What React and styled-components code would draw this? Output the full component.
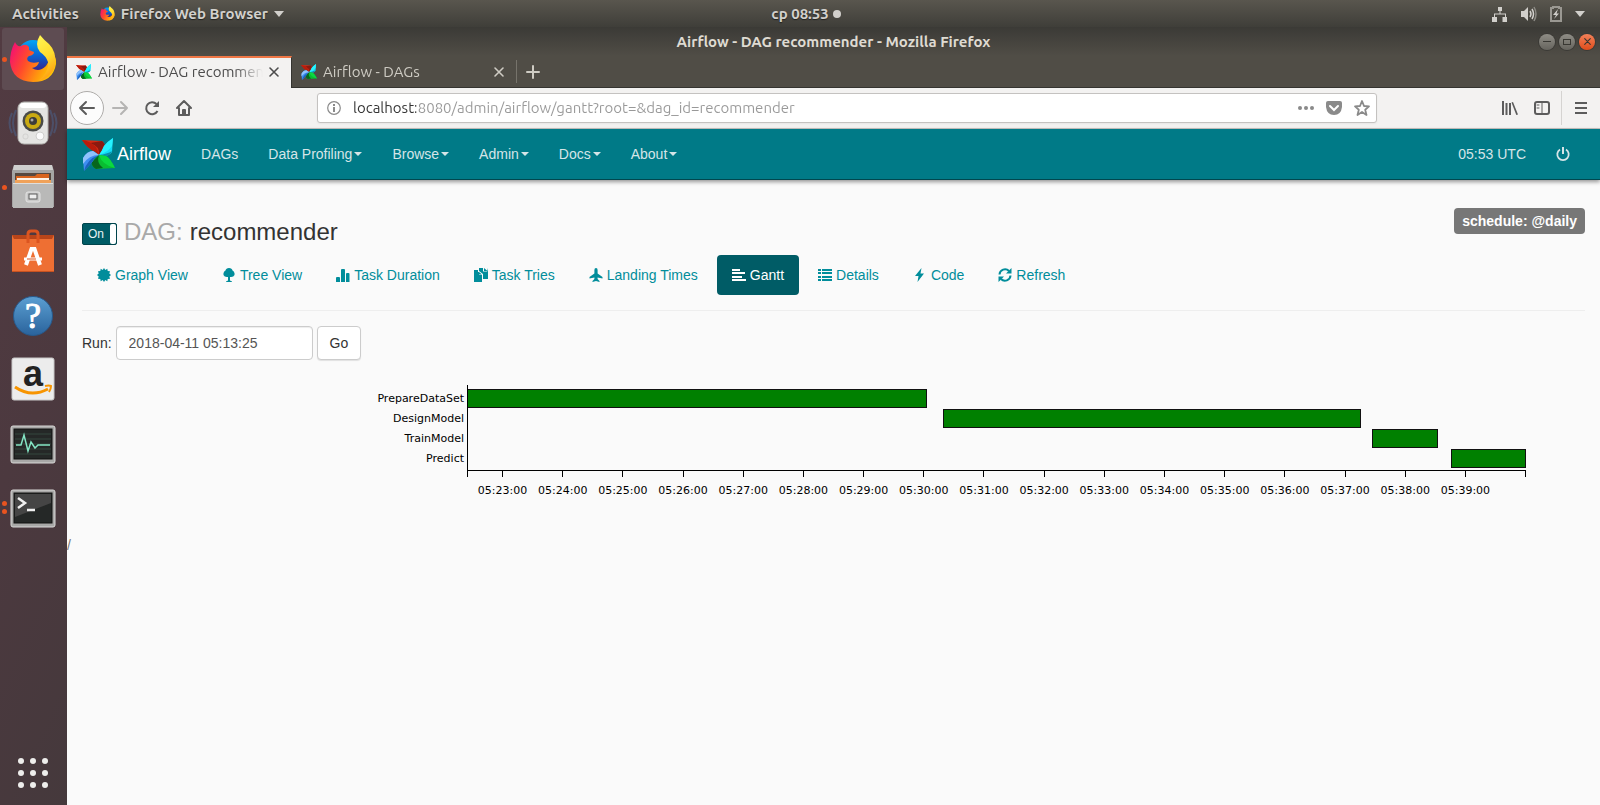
import React from "react";
import styled, { createGlobalStyle, css } from "styled-components";

const GlobalStyle = createGlobalStyle`
  *, *::before, *::after { box-sizing: border-box; }
  body { margin: 0; background: #fafafa; }
  button, input { font: inherit; }
`;

const UI_FONT = `Ubuntu, "Noto Sans", sans-serif`;
const PAGE_FONT = `"Liberation Sans", Arial, sans-serif`;

const resetButton = css`
  border: 0;
  padding: 0;
  background: none;
  color: inherit;
  display: flex;
  align-items: center;
  justify-content: center;
`;

/* ---------- desktop ---------- */

const Desktop = styled.div`
  min-height: 100vh;
  display: flex;
  flex-direction: column;
  font-family: ${UI_FONT};
`;

const TopBar = styled.header`
  height: 27px;
  flex: none;
  display: grid;
  grid-template-columns: 1fr auto 1fr;
  align-items: center;
  padding: 0 15px 0 12px;
  background: linear-gradient(#59564e, #3f3e39);
  color: #d2d0cc;
  font-size: 15px;
  font-weight: 600;
  text-shadow: 0 1px 1px #22221f;
`;

const TopGroup = styled.div`
  display: flex;
  align-items: center;
  justify-content: ${(p) => (p.$end ? "flex-end" : "flex-start")};
  gap: ${(p) => (p.$end ? "13px" : "21px")};
`;

const TopButton = styled.button`
  ${resetButton}
  gap: 6px;
  line-height: 20px;
  text-shadow: inherit;
  white-space: nowrap;
`;

const Clock = styled(TopButton)`
  gap: 4px;
  padding-left: 15px;
`;

const Body = styled.div`
  flex: 1;
  display: flex;
  min-width: 0;
`;

const Dock = styled.nav`
  width: 67px;
  flex: none;
  display: flex;
  flex-direction: column;
  gap: 2px;
  padding: 1px 3px 1px 2px;
  background: linear-gradient(115deg, #523b42, #4c393f 50%, #45393c);
`;

const DockButton = styled.button`
  ${resetButton}
  position: relative;
  height: 62px;
  border-radius: 3px;
  background: ${(p) => (p.$active ? "#5e4c52" : "none")};
  &:last-child {
    margin-top: auto;
  }
`;

const RunningDots = styled.span`
  position: absolute;
  left: 0;
  top: 0;
  bottom: 0;
  display: flex;
  flex-direction: column;
  justify-content: center;
  gap: 3px;
  i {
    width: 5px;
    height: 5px;
    border-radius: 50%;
    background: #e95420;
  }
`;

/* ---------- browser window ---------- */

const Window = styled.div`
  flex: 1;
  min-width: 0;
  display: flex;
  flex-direction: column;
`;

const TitleBar = styled.div`
  height: 29px;
  display: grid;
  grid-template-columns: 1fr auto 1fr;
  align-items: center;
  background: linear-gradient(#3b3a36, #504d46);
  color: #dfdbd2;
  font-size: 15px;
  line-height: 20px;
  font-weight: 700;
`;

const WindowButtons = styled.div`
  grid-column: 3;
  display: flex;
  justify-content: flex-end;
  gap: 4px;
  padding-right: 5px;
`;

const WindowTitle = styled.span`
  grid-column: 2;
`;

const WindowButton = styled.button`
  ${resetButton}
  width: 16px;
  height: 16px;
  border-radius: 50%;
  color: #383732;
  background: ${(p) =>
    p.$close ? "linear-gradient(#f38159, #df4c1b)" : "linear-gradient(#8f8d86, #66645e)"};
  box-shadow: 0 0 0 1px #3b3a36;
`;

const TabStrip = styled.div`
  height: 32px;
  display: flex;
  background: #504d46;
  border-bottom: 1px solid #353430;
`;

const Tab = styled.div`
  width: 225px;
  display: flex;
  align-items: center;
  gap: 6px;
  padding: 0 13px 0 9px;
  font-size: 15px;
  line-height: 20px;
  color: ${(p) => (p.$active ? "#4c4c4c" : "#cfccc4")};
  ${(p) =>
    p.$active &&
    css`
      height: 32px;
      padding: 0 12px 3px 9px;
      background: #f3f2f1;
      border-top: 2px solid #f07746;
      border-right: 1px solid #353430;
    `}
`;

const TabTitle = styled.span`
  flex: 1;
  overflow: hidden;
  white-space: nowrap;
  mask-image: linear-gradient(to left, transparent, #000 28px);
`;

const TabClose = styled.button`
  ${resetButton}
`;

const NewTab = styled.button`
  ${resetButton}
  margin: 4px 0 4px -1px;
  padding: 0 9px;
  border-left: 1px solid #76736b;
  color: #cfccc4;
`;

const Toolbar = styled.div`
  height: 41px;
  display: flex;
  align-items: center;
  padding: 0 13px 0 4px;
  background: #f3f2f1;
  border-bottom: 1px solid #c5c2bf;
  color: #5c5c5c;
`;

const NavButtons = styled.div`
  display: flex;
  align-items: center;
  gap: 16px;
`;

const ToolButton = styled.button`
  ${resetButton}
  ${(p) =>
    p.$round &&
    css`
      width: 34px;
      height: 34px;
      margin-right: -8px;
      margin-left: -1px;
      border: 1px solid #aeacaa;
      border-radius: 50%;
      background: #fcfcfc;
    `}
`;

const UrlBox = styled.div`
  flex: 1;
  height: 30px;
  margin-left: 125px;
  margin-right: 125px;
  display: flex;
  align-items: center;
  gap: 12px;
  padding: 0 6px 0 9px;
  background: #fff;
  border: 1px solid #c4c2c0;
  border-radius: 3px;
  box-shadow: 0 1px 2px #0000000d;
  color: #8a8a8a;
`;

const UrlInput = styled.input`
  flex: 1;
  min-width: 0;
  border: 0;
  padding: 0;
  outline: 0;
  font-size: 15px;
  line-height: 20px;
  color: transparent;
  background: linear-gradient(to right, #333 63px, #999 63px);
  background-clip: text;
  -webkit-background-clip: text;
`;

const ToolbarEnd = styled.div`
  display: flex;
  align-items: center;
  gap: 16px;
`;

const ToolDivider = styled.span`
  width: 1px;
  height: 34px;
  margin: 0 -3px 0 -5px;
  background: #d5d3d1;
`;

/* ---------- Airflow page ---------- */

const Page = styled.div`
  flex: 1;
  background: #fafafa;
  font-family: ${PAGE_FONT};
  font-size: 14px;
  line-height: 20px;
  color: #333;
`;

const Navbar = styled.nav`
  height: 51px;
  display: flex;
  align-items: center;
  padding: 0 15px;
  background: #007a87;
  border-bottom: 1px solid #00474f;
  box-shadow: 0 2px 4px #00000066;
`;

const Brand = styled.a`
  display: flex;
  align-items: center;
  gap: 2px;
  margin-right: 15px;
  font-size: 18px;
  color: #fff;
  text-decoration: none;
`;

const NavLink = styled.a`
  display: flex;
  align-items: center;
  padding: 15px;
  color: #d5e5e7;
  text-decoration: none;
`;

const NavSpacer = styled.span`
  flex: 1;
`;

const Caret = styled.span`
  margin-left: 2px;
  border: 4px solid transparent;
  border-top-color: currentColor;
  border-bottom: 0;
`;

const Main = styled.main`
  padding: 28px 15px 0;
`;

const Heading = styled.div`
  display: flex;
  justify-content: space-between;
  align-items: flex-start;
`;

const Title = styled.h3`
  display: flex;
  align-items: center;
  gap: 7px;
  margin: 11px 0 0;
  font-size: 24px;
  line-height: 26px;
  font-weight: 400;
  color: #333;
`;

const Muted = styled.span`
  color: #a9a9a9;
`;

const Switch = styled.label`
  display: flex;
  width: 35px;
  height: 22px;
  margin-top: 4px;
  background: #005c66;
  border: 1px solid #00444c;
  border-radius: 2px;
  color: #e8f4f5;
  font-size: 12px;
  line-height: 20px;
  padding-left: 5px;
  input {
    appearance: none;
    width: 6px;
    height: 20px;
    margin: 0 0 0 auto;
    background: #fff;
    border-radius: 2px;
  }
`;

const Badge = styled.span`
  padding: 3px 8px;
  border-radius: 4px;
  background: #777;
  color: #fff;
  font-weight: 700;
`;

const Pills = styled.ul`
  display: flex;
  flex-wrap: wrap;
  gap: 4px;
  margin: 10px 0 0;
  padding: 0 0 15px;
  list-style: none;
  border-bottom: 1px solid #eee;
`;

const Pill = styled.a`
  display: flex;
  align-items: center;
  gap: 4px;
  padding: 10px 15px;
  border-radius: 4px;
  text-decoration: none;
  color: ${(p) => (p.$active ? "#fff" : "#018d9b")};
  background: ${(p) => (p.$active ? "#005c66" : "transparent")};
`;

const RunForm = styled.form`
  display: flex;
  align-items: center;
  gap: 4px;
  margin: 15px 0 20px;
`;

const RunInput = styled.input`
  width: 197px;
  height: 34px;
  padding: 6px 12px;
  border: 1px solid #ccc;
  border-radius: 4px;
  background: #fff;
  box-shadow: inset 0 1px 1px #00000013;
  color: #555;
`;

const GoButton = styled.button`
  height: 34px;
  padding: 6px 12px;
  border: 1px solid #ccc;
  border-radius: 4px;
  background: #fff;
  box-shadow: 0 1px 1px #0000001a;
  color: #333;
`;

const Chart = styled.svg`
  display: block;
  width: 100%;
  height: 155px;
  overflow: visible;
  font-family: "DejaVu Sans", sans-serif;
  font-size: 11px;
  fill: #000;
`;

const Plot = styled.svg`
  width: calc(100% - 445px);
  overflow: visible;
  shape-rendering: crispEdges;
`;

const Footer = styled.footer`
  color: #777;
`;

/* ---------- icons ---------- */

const Icon = ({ size = 16, w, h, box, children, ...rest }) => (
  <svg
    width={w || size}
    height={h || size}
    viewBox={box || `0 0 ${w || size} ${h || size}`}
    fill="currentColor"
    aria-hidden="true"
    overflow="visible"
    {...rest}
  >
    {children}
  </svg>
);

const Line = (p) => (
  <Icon {...p} fill="none" stroke="currentColor" strokeLinecap="round" strokeLinejoin="round" />
);

const Pinwheel = ({ size = 33 }) => (
  <Icon size={size} box="0 0 33 33">
    <path d="M0 2 L20 3 Q24 6 22 11 L17 17 L12 13 Q6 11 0 2 Z" fill="#d42a14" />
    <path d="M8 5 L20 3 Q24 6 22 11 L17 17 Q18 8 8 5 Z" fill="#8a1a10" />
    <path d="M0 2 Q8 3 14 9 L17 17 L12 13 Q6 11 0 2 Z" fill="#b81c0c" />
    <path d="M31 0 L30 14 Q27 18 22 18 L17 17 Q20 13 22 8 Q25 4 31 0 Z" fill="#12dcf5" />
    <path d="M31 0 L30 8 Q26 14 17 17 Q20 13 22 8 Q25 4 31 0 Z" fill="#25f3ff" />
    <path d="M30 13 Q27 19 22 18 L17 17 Q25 16 30 13 Z" fill="#0a8fae" />
    <path d="M33 30 L14 31 Q9 28 10 24 L17 17 L24 18 Q28 20 33 30 Z" fill="#09bd32" />
    <path d="M14 31 Q9 28 10 24 L17 17 Q14 25 21 30 Z" fill="#07661d" />
    <path d="M17 17 L24 18 Q28 20 33 30 Q20 27 17 17 Z" fill="#0bd940" />
    <path d="M2 33 L1 20 Q5 13 11 13 L17 17 Q12 19 11 23 Q7 28 2 33 Z" fill="#3d8df0" />
    <path d="M1 20 Q5 13 11 13 L17 17 Q7 17 1 26 Z" fill="#8fc2fb" />
    <path d="M2 33 Q5 21 17 17 Q12 19 11 23 Q7 28 2 33 Z" fill="#1c63bd" />
  </Icon>
);

const Firefox = ({ size = 48 }) => (
  <Icon size={size} box="0 0 48 48">
    <defs>
      <linearGradient id="fox" x1="0" y1="0.3" x2="1" y2="0.7">
        <stop offset="0" stopColor="#f5156c" />
        <stop offset="0.35" stopColor="#ff4b2b" />
        <stop offset="0.7" stopColor="#ff980e" />
        <stop offset="1" stopColor="#ffd400" />
      </linearGradient>
      <linearGradient id="tail" x1="0.3" y1="0" x2="0.6" y2="1">
        <stop offset="0" stopColor="#fff44f" />
        <stop offset="0.5" stopColor="#ffdc2e" />
        <stop offset="1" stopColor="#ff980e" />
      </linearGradient>
      <linearGradient id="globe" x1="0.5" y1="0" x2="0.5" y2="1">
        <stop offset="0" stopColor="#00a6f5" />
        <stop offset="0.5" stopColor="#0a62d0" />
        <stop offset="1" stopColor="#3a1d86" />
      </linearGradient>
    </defs>
    <circle cx="24" cy="21" r="16" fill="url(#globe)" />
    <path
      d="M6 7 Q8 12 12 11 Q17 8 20 12 L20 15 L25 17 Q25 20 20 21 Q17 23 19 26 Q23 29 30 27 Q29 32 23 33 Q30 38 37 31 Q43 24 39 12 Q48 20 47 29 Q44 47 24 47 Q3 46 1 27 Q1 16 6 7 Z"
      fill="url(#fox)"
    />
    <path
      d="M31 0 Q35 5 40 9 Q48 17 46 30 Q43 43 29 46 Q40 38 39 27 Q37 21 31 17 Q25 10 31 0 Z"
      fill="url(#tail)"
    />
  </Icon>
);

const Speaker = () => (
  <Icon w={50} h={44}>
    <g fill="none" stroke="#4a6590" strokeWidth="2" opacity="0.5">
      <path d="M8 9 Q2 22 8 35" />
      <path d="M4 12 Q-1 22 4 32" />
      <path d="M42 9 Q48 22 42 35" />
      <path d="M46 12 Q51 22 46 32" />
    </g>
    <rect x="10" y="1" width="30" height="42" rx="6" fill="#e4e4e2" stroke="#b3b3b0" />
    <rect x="12" y="2" width="26" height="5" rx="3" fill="#fff" />
    <circle cx="25" cy="20" r="10.500" fill="#494b49" />
    <circle cx="25" cy="20" r="8" fill="#c9aa12" />
    <circle cx="25" cy="20" r="4" fill="#3b3c3a" />
    <circle cx="24" cy="19" r="1.500" fill="#aaa" />
    <circle cx="32" cy="35" r="4" fill="#fafafa" stroke="#cfcfcd" />
    <rect x="15" y="33" width="5" height="5" rx="2" fill="none" stroke="#d2d2d0" />
  </Icon>
);

const Files = () => (
  <Icon w={44} h={44}>
    <path d="M3 0 H41 L43 6 V42 H1 V6 Z" fill="#a5a5a4" />
    <path d="M3 0 H41 L42 5 H2 Z" fill="#cfcfce" />
    <rect x="4" y="8" width="36" height="12" fill="#57483f" />
    <path d="M5 11 L24 11 L26 9 H38 V20 H5 Z" fill="#d8641e" />
    <rect x="6" y="13" width="32" height="2" fill="#fff3e6" />
    <rect x="4" y="15" width="36" height="4" fill="#f0a25a" />
    <rect x="2" y="18" width="40" height="25" fill="#b9b9b8" />
    <rect x="2" y="18" width="40" height="1" fill="#dededd" />
    <rect x="15" y="27" width="14" height="10" rx="2" fill="#c9c9c8" stroke="#e4e4e4" />
    <rect x="18" y="29" width="8" height="5" fill="#eee" stroke="#5b5b5a" />
  </Icon>
);

const SoftwareBag = () => (
  <Icon w={44} h={44}>
    <rect x="1" y="6" width="42" height="37" fill="#ee6f33" />
    <path d="M1 6 H43 L41 10 H3 Z" fill="#b8451a" />
    <rect x="1" y="42" width="42" height="1" fill="#c85220" />
    <path d="M17 14 V5 Q17 2 20 2 H24 Q27 2 27 5 V14" fill="none" stroke="#db5520" strokeWidth="3" />
    <g fill="none" stroke="#fff" strokeWidth="4">
      <path d="M15 36 L20.500 20 H23.500 L29 36" />
      <path d="M13 30 H31" strokeWidth="3" />
    </g>
    <path d="M16 30 H25" stroke="#d9541e" strokeWidth="1" />
  </Icon>
);

const Help = () => (
  <Icon w={44} h={44} box="0 -1 44 44">
    <defs>
      <linearGradient id="help" x1="0" y1="0" x2="0" y2="1">
        <stop offset="0" stopColor="#5b9fd2" />
        <stop offset="1" stopColor="#2a639c" />
      </linearGradient>
    </defs>
    <circle cx="22" cy="22" r="19.500" fill="url(#help)" stroke="#27598c" />
    <text x="22" y="34" textAnchor="middle" fontFamily="Liberation Serif, serif" fontSize="36" fill="#fff" stroke="#fff">
      ?
    </text>
  </Icon>
);

const Amazon = () => (
  <Icon w={44} h={44}>
    <rect x="1" y="1" width="42" height="42" rx="2" fill="#ececec" stroke="#c9c9c9" />
    <text x="22" y="29" textAnchor="middle" fontFamily="Liberation Sans, sans-serif" fontSize="36" fontWeight="700" fill="#222">
      a
    </text>
    <path d="M4 30 Q20 41 37 32" fill="none" stroke="#f79400" strokeWidth="3" />
    <path d="M34 29 Q38 28 40 29 Q40 32 38 35" fill="none" stroke="#f79400" strokeWidth="2" />
  </Icon>
);

const Screen = ({ children }) => (
  <Icon w={46} h={40} box="0 -2 46 40">
    <rect x="1" y="1" width="44" height="37" rx="2" fill="#a8a8a7" stroke="#d8d8d7" />
    <rect x="4" y="4" width="38" height="30" fill="#252827" stroke="#111" />
    {children}
  </Icon>
);

const MonitorIcon = () => (
  <Screen>
    <path d="M5 9 H41 M5 14 H41 M5 19 H41 M5 24 H41 M5 29 H41" stroke="#34463f" />
    <path
      d="M6 20 H11 L14 10 L18 26 L21 17 L25 23 L28 20 H40"
      fill="none"
      stroke="#84e5c4"
      strokeWidth="1.500"
    />
  </Screen>
);

const TerminalIcon = () => (
  <Screen>
    <path d="M5 5 H41 V14 L5 28 Z" fill="#454545" />
    <path d="M8 9 L15 14 L8 19" fill="none" stroke="#f0f0f0" strokeWidth="2.500" />
    <path d="M17 21 H25" stroke="#f0f0f0" strokeWidth="2.500" />
  </Screen>
);

const AppsGrid = () => (
  <Icon size={32} fill="#eeeeec">
    {[4, 16, 28].map((y) => [4, 16, 28].map((x) => <circle key={`${x}-${y}`} cx={x} cy={y} r="3" />))}
  </Icon>
);

const DownTriangle = () => (
  <Icon w={10} h={6}>
    <path d="M0 0 H10 L5 6 Z" />
  </Icon>
);

const Cross = ({ size = 10 }) => (
  <Line size={size} box="0 0 10 10" strokeWidth="1.600">
    <path d="M1 1 L9 9 M9 1 L1 9" />
  </Line>
);

const glyphs = {
  graph: (
    <path d="M7 0 L8.300 1.900 L10.300 .8 L10.700 3.100 L13 3.300 L12.300 5.500 L14 7 L12.300 8.500 L13 10.700 L10.700 10.900 L10.300 13.200 L8.300 12.100 L7 14 L5.700 12.100 L3.700 13.200 L3.300 10.900 L1 10.700 L1.700 8.500 L0 7 L1.700 5.500 L1 3.300 L3.300 3.100 L3.700 .8 L5.700 1.900 Z" />
  ),
  tree: (
    <path d="M7 0 Q10 0 10.500 2.500 Q13 4 12.500 7 Q11.500 9.500 8 9 V12.500 L10 13.500 V14 H4 V13.500 L6 12.500 V9 Q2.500 9.500 1.500 7 Q1 4 3.500 2.500 Q4 0 7 0 Z" />
  ),
  stats: (
    <path d="M1 9 H3 Q4 9 4 10 V14 H0 V10 Q0 9 1 9 Z M6 1 H8 Q9 1 9 2 V14 H5 V2 Q5 1 6 1 Z M11 5 H12.500 Q13.500 5 13.500 6 V14 H10 V6 Q10 5 11 5 Z" />
  ),
  copy: (
    <path d="M0 2 H4 V4 H5 V7 H8 V14 H0 Z M5 0 H9 V3.500 H13 V0 L14 4 V11 H9 V6 L5 3 Z M10 0 L13.500 3 H10 Z M5 4 L8 6.500 H5 Z" />
  ),
  plane: (
    <path d="M7 0 Q8.600 0 8.600 2 V5.500 L13.500 9 V10.500 L8.600 9.500 V11 L10.500 13 V14 L7 13 L3.500 14 V13 L5.400 11 V9.500 L.5 10.500 V9 L5.400 5.500 V2 Q5.400 0 7 0 Z" />
  ),
  gantt: <path d="M0 1 H8 V3 H0 Z M0 4 H13 V6 H0 Z M0 8 H10 V10 H0 Z M0 11 H14 V13 H0 Z" />,
  list: (
    <path d="M0 1 H3 V3 H0 Z M4 1 H14 V3 H4 Z M0 4 H3 V6 H0 Z M4 4 H14 V6 H4 Z M0 8 H3 V10 H0 Z M4 8 H14 V10 H4 Z M0 11 H3 V13 H0 Z M4 11 H14 V13 H4 Z" />
  ),
  code: <path d="M8.500 0 L2 8 H5.500 L4.500 14 L11 5.500 H7.500 Z" />,
  refresh: (
    <g>
      <path d="M1.500 6.500 A5.500 5.500 0 0 1 11 3 M12.500 7.500 A5.500 5.500 0 0 1 3 11" fill="none" stroke="currentColor" strokeWidth="2" />
      <path d="M13.500 0 V5.500 H8 Z M.5 14 V8.500 H6 Z" />
    </g>
  ),
};

/* ---------- data ---------- */

const DOCK = [
  { name: "Firefox Web Browser", icon: <Firefox />, dots: 1, active: true },
  { name: "Rhythmbox", icon: <Speaker />, dots: 0 },
  { name: "Files", icon: <Files />, dots: 1 },
  { name: "Ubuntu Software", icon: <SoftwareBag />, dots: 0 },
  { name: "Help", icon: <Help />, dots: 0 },
  { name: "Amazon", icon: <Amazon />, dots: 0 },
  { name: "System Monitor", icon: <MonitorIcon />, dots: 0 },
  { name: "Terminal", icon: <TerminalIcon />, dots: 2 },
  { name: "Show Applications", icon: <AppsGrid />, dots: 0 },
];

const MENUS = ["Data Profiling", "Browse", "Admin", "Docs", "About"];

const VIEWS = [
  ["graph", "Graph View"],
  ["tree", "Tree View"],
  ["stats", "Task Duration"],
  ["copy", "Task Tries"],
  ["plane", "Landing Times"],
  ["gantt", "Gantt"],
  ["list", "Details"],
  ["code", "Code"],
  ["refresh", "Refresh"],
];

// Minutes past 05:00
const RANGE = { start: 22.41, end: 39.99 };
const TASKS = [
  { name: "PrepareDataSet", start: 22.41, end: 30.05 },
  { name: "DesignModel", start: 30.33, end: 37.25 },
  { name: "TrainModel", start: 37.46, end: 38.54 },
  { name: "Predict", start: 38.77, end: 39.99 },
];
const TICKS = Array.from({ length: 17 }, (_, i) => 23 + i);
const percent = (minutes) => `${(minutes / (RANGE.end - RANGE.start)) * 100}%`;
const position = (minute) => percent(minute - RANGE.start);

function GanttChart() {
  return (
    <Chart role="img" aria-label="Gantt chart of task runs">
      {TASKS.map((t, i) => (
        <text key={t.name} x="382" y={22 + i * 20} textAnchor="end">
          {t.name}
        </text>
      ))}
      <Plot x="385" y="0" height="130">
        {TASKS.map((t, i) => (
          <rect
            key={t.name}
            x={position(t.start)}
            y={9 + i * 20}
            width={percent(t.end - t.start)}
            height="18"
            fill="green"
            stroke="#111"
          />
        ))}
        <g stroke="#000">
          <line x1="0" y1="5" x2="0" y2="97" />
          <line x1="0" y1="90" x2="100%" y2="90" />
          <line x1="100%" y1="90" x2="100%" y2="97" />
          {TICKS.map((m) => (
            <line key={m} x1={position(m)} y1="90" x2={position(m)} y2="97" />
          ))}
        </g>
        {TICKS.map((m) => (
          <text key={m} x={position(m)} y="114" textAnchor="middle">
            {`05:${m}:00`}
          </text>
        ))}
      </Plot>
    </Chart>
  );
}

function DesktopBar() {
  return (
    <TopBar>
      <TopGroup>
        <TopButton>Activities</TopButton>
        <TopButton>
          <Firefox size={15} />
          Firefox Web Browser
          <DownTriangle />
        </TopButton>
      </TopGroup>
      <Clock>
        ср 08:53
        <Icon size={8}>
          <circle cx="4" cy="4" r="4" />
        </Icon>
      </Clock>
      <TopGroup $end>
        <Icon size={16}>
          <path d="M6 1 H10 V5 H8.500 V7.500 H14 V11 H15 V16 H10.500 V11 H13 V8.500 H3 V11 H5 V16 H0 V11 H2 V7.500 H7.500 V5 H6 Z" />
        </Icon>
        <Icon size={16}>
          <path d="M0 5 H3 L7 1 V15 L3 11 H0 Z" />
          <path d="M9 5 Q11 8 9 11 M11 3 Q14 8 11 13" fill="none" stroke="currentColor" strokeWidth="1.500" />
          <path d="M13 1 Q17 8 13 15" fill="none" stroke="#8b8983" strokeWidth="1.500" />
        </Icon>
        <Icon w={12} h={16}>
          <path d="M1 2 H3 V1 H9 V2 H11 V15 H1 Z" fill="none" stroke="#9a9892" strokeWidth="2" />
          <path d="M8 3 L3 9 H6 L4 13 L9 7.500 H6.500 Z" />
        </Icon>
        <DownTriangle />
      </TopGroup>
    </TopBar>
  );
}

function Browser() {
  return (
    <>
      <TitleBar>
        <WindowTitle>Airflow - DAG recommender - Mozilla Firefox</WindowTitle>
        <WindowButtons>
          <WindowButton aria-label="Minimize">
            <Icon size={8}>
              <path d="M0 3 H8 V4 H0 Z" />
            </Icon>
          </WindowButton>
          <WindowButton aria-label="Maximize">
            <Icon size={8}>
              <path d="M0 1 H8 V7 H0 Z M1 2 V6 H7 V2 Z" fillRule="evenodd" />
            </Icon>
          </WindowButton>
          <WindowButton aria-label="Close" $close>
            <Cross size={7} />
          </WindowButton>
        </WindowButtons>
      </TitleBar>
      <TabStrip>
        <Tab $active>
          <Pinwheel size={16} />
          <TabTitle>Airflow - DAG recommender</TabTitle>
          <TabClose aria-label="Close tab">
            <Cross />
          </TabClose>
        </Tab>
        <Tab>
          <Pinwheel size={16} />
          <TabTitle>Airflow - DAGs</TabTitle>
          <TabClose aria-label="Close tab">
            <Cross />
          </TabClose>
        </Tab>
        <NewTab aria-label="New tab">
          <Line size={14} strokeWidth="2">
            <path d="M7 1 V13 M1 7 H13" />
          </Line>
        </NewTab>
      </TabStrip>
      <Toolbar>
        <NavButtons>
          <ToolButton aria-label="Back" $round>
            <Line size={16} strokeWidth="2">
              <path d="M15 8 H1 M7 2 L1 8 L7 14" />
            </Line>
          </ToolButton>
          <ToolButton aria-label="Forward" disabled>
            <Line size={16} strokeWidth="2" color="#b5b4b3">
              <path d="M1 8 H15 M9 2 L15 8 L9 14" />
            </Line>
          </ToolButton>
          <ToolButton aria-label="Reload">
            <Icon size={16}>
              <path d="M13.500 11 A6 6 0 1 1 12.500 4" fill="none" stroke="currentColor" strokeWidth="2" />
              <path d="M15 1 V7 H9 Z" />
            </Icon>
          </ToolButton>
          <ToolButton aria-label="Home">
            <Line size={16} strokeWidth="2">
              <path d="M1 8 L8 1 L15 8 M3 8 V15 H13 V8" />
              <path d="M7 14 V10 H9 V14" />
            </Line>
          </ToolButton>
        </NavButtons>
        <UrlBox>
          <Icon size={14}>
            <circle cx="7" cy="7" r="6.300" fill="none" stroke="currentColor" strokeWidth="1.200" />
            <path d="M6 3 H8 V5 H6 Z M6 6 H8 V11 H6 Z" />
          </Icon>
          <UrlInput aria-label="Address" defaultValue="localhost:8080/admin/airflow/gantt?root=&dag_id=recommender" />
          <Icon size={16}>
            <circle cx="2" cy="8" r="2" />
            <circle cx="8" cy="8" r="2" />
            <circle cx="14" cy="8" r="2" />
          </Icon>
          <Icon size={16}>
            <path d="M2 1 H14 Q16 1 16 3 V7 Q15 15 8 15 Q1 15 0 7 V3 Q0 1 2 1 Z" />
            <path d="M4 6 L8 10 L12 6" fill="none" stroke="#fff" strokeWidth="2" strokeLinecap="round" />
          </Icon>
          <Line size={16} strokeWidth="1.800">
            <path d="M8 1 L10 6 L15 6.400 L11.200 9.700 L12.500 15 L8 12 L3.500 15 L4.800 9.700 L1 6.400 L6 6 Z" />
          </Line>
        </UrlBox>
        <ToolbarEnd>
          <ToolButton aria-label="Library">
            <Icon size={16}>
              <path d="M0 1 H2 V15 H0 Z M3.500 3 H5.500 V15 H3.500 Z M7 3 H9 V15 H7 Z M9.500 2.500 L11 2 L16 14.500 L14.300 15 Z" />
            </Icon>
          </ToolButton>
          <ToolButton aria-label="Sidebars">
            <Line size={16} strokeWidth="2">
              <rect x="1" y="2" width="14" height="12" rx="2" />
              <path d="M8 2 V14 M3 5 H5 M3 8 H5" strokeWidth="1" />
            </Line>
          </ToolButton>
          <ToolDivider />
          <ToolButton aria-label="Menu">
            <Icon size={12}>
              <path d="M0 0 H12 V2 H0 Z M0 5 H12 V7 H0 Z M0 10 H12 V12 H0 Z" />
            </Icon>
          </ToolButton>
        </ToolbarEnd>
      </Toolbar>
    </>
  );
}

function AirflowPage() {
  return (
    <Page>
      <Navbar>
        <Brand href="#">
          <Pinwheel />
          Airflow
        </Brand>
        <NavLink href="#">DAGs</NavLink>
        {MENUS.map((m) => (
          <NavLink key={m} href="#">
            {m}
            <Caret />
          </NavLink>
        ))}
        <NavSpacer />
        <NavLink href="#">05:53 UTC</NavLink>
        <NavLink href="#" aria-label="Log out">
          <Icon size={14}>
            <path d="M4 2.500 A5.700 5.700 0 1 0 10 2.500" fill="none" stroke="currentColor" strokeWidth="1.800" />
            <path d="M6 0 H8 V7 H6 Z" />
          </Icon>
        </NavLink>
      </Navbar>
      <Main>
        <Heading>
          <Title>
            <Switch>
              On
              <input type="checkbox" defaultChecked aria-label="DAG enabled" />
            </Switch>
            <Muted>DAG:</Muted>
            <span>recommender</span>
          </Title>
          <Badge>schedule: @daily</Badge>
        </Heading>
        <Pills>
          {VIEWS.map(([glyph, label]) => (
            <li key={label}>
              <Pill href="#" $active={label === "Gantt"}>
                <Icon size={14}>{glyphs[glyph]}</Icon>
                {label}
              </Pill>
            </li>
          ))}
        </Pills>
        <RunForm onSubmit={(e) => e.preventDefault()}>
          <label htmlFor="run">Run:</label>
          <RunInput id="run" defaultValue="2018-04-11 05:13:25" />
          <GoButton type="submit">Go</GoButton>
        </RunForm>
        <GanttChart />
      </Main>
      <Footer>/</Footer>
    </Page>
  );
}

export default function App() {
  return (
    <Desktop>
      <GlobalStyle />
      <DesktopBar />
      <Body>
        <Dock>
          {DOCK.map((d) => (
            <DockButton key={d.name} aria-label={d.name} $active={d.active}>
              <RunningDots>
                {Array.from({ length: d.dots }, (_, i) => (
                  <i key={i} />
                ))}
              </RunningDots>
              {d.icon}
            </DockButton>
          ))}
        </Dock>
        <Window>
          <Browser />
          <AirflowPage />
        </Window>
      </Body>
    </Desktop>
  );
}
